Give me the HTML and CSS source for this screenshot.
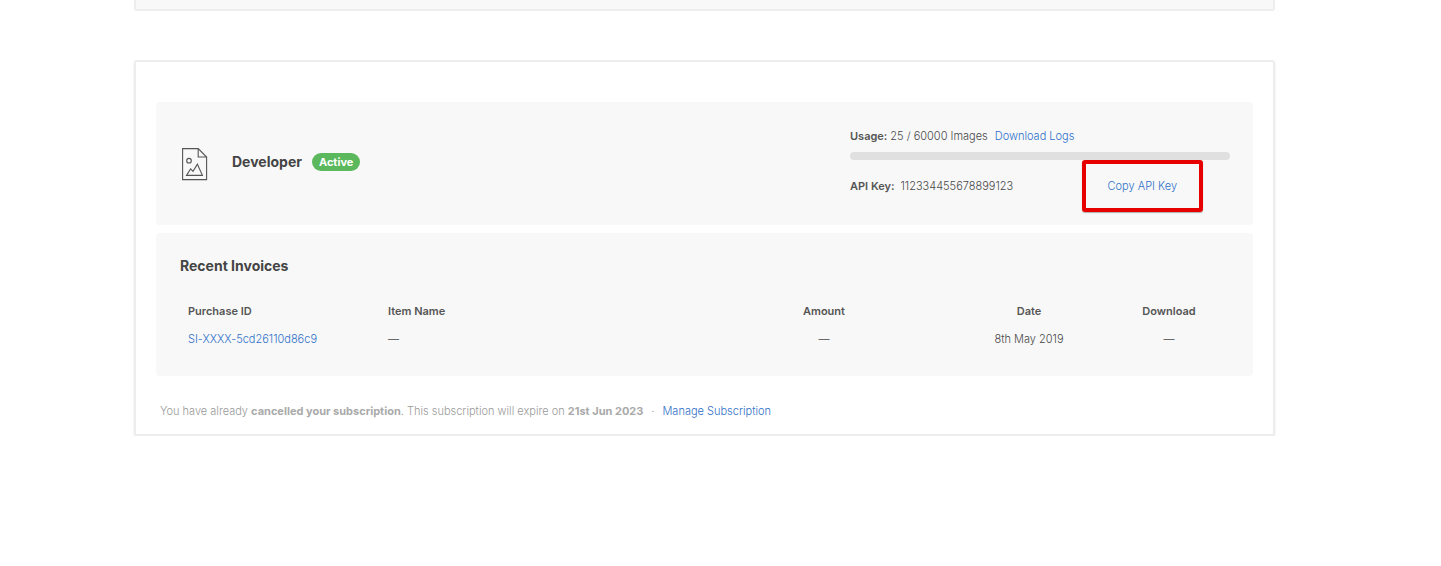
FILE: index.html
```html
<!DOCTYPE html>
<html lang="en">
<head>
<meta charset="utf-8">
<meta name="viewport" content="width=device-width, initial-scale=1">
<title>Subscriptions</title>
<link rel="stylesheet" href="styles.css">
</head>
<body>
<main class="page">
  <section class="card card-previous" aria-hidden="true"></section>
  <section class="card card-subscription">
    <div class="panel plan">
      <svg class="plan-icon" width="28" height="34" viewBox="0 0 28 34" fill="none" stroke="#555" stroke-width="1.1" aria-hidden="true">
        <path d="M1.6 1.6H17.2L25.6 10V32.6H1.6Z"/>
        <path d="M17.2 1.6V10H25.6"/>
        <circle cx="8" cy="13.7" r="2.3"/>
        <path d="M5.6 28.4L9.6 21.8L12 24.4L16.4 17.2L21.4 28.4Z"/>
      </svg>
      <div class="plan-title">
        <h2 class="heading">Developer</h2>
        <span class="badge">Active</span>
      </div>
      <div class="usage">
        <div class="usage-row">
          <strong id="usage-label">Usage:</strong>
          <span>25 / 60000 Images</span>
          <a class="logs" href="#logs">Download Logs</a>
        </div>
        <div class="meter" role="progressbar" aria-labelledby="usage-label" aria-valuemin="0" aria-valuemax="60000" aria-valuenow="25"></div>
        <div class="key-row">
          <strong>API Key:</strong>
          <span class="key">112334455678899123</span>
          <button class="copy" type="button">Copy API Key</button>
        </div>
      </div>
    </div>
    <div class="panel invoices">
      <h2 class="heading">Recent Invoices</h2>
      <table class="table">
        <colgroup><col class="c-id"><col class="c-item"><col class="c-amount"><col class="c-date"><col class="c-download"></colgroup>
        <thead>
          <tr><th>Purchase ID</th><th>Item Name</th><th class="center">Amount</th><th class="center">Date</th><th class="center">Download</th></tr>
        </thead>
        <tbody>
          <tr><td><a href="#invoice">SI-XXXX-5cd26110d86c9</a></td><td>—</td><td class="center">—</td><td class="center">8th May 2019</td><td class="center">—</td></tr>
        </tbody>
      </table>
    </div>
    <p class="note">You have already <strong>cancelled your subscription</strong>. This subscription will expire on <strong>21st Jun 2023</strong><span class="dot">·</span><a href="#manage">Manage Subscription</a></p>
  </section>
</main>
</body>
</html>
```
FILE: styles.css
```css
* { box-sizing: border-box; }
body {
  margin: 0;
  background: #fff;
  color: #484848;
  font: 300 11px/20px Inter, "Liberation Sans", sans-serif;
}
a { color: #2f70c8; text-decoration: none; }
strong, th { color: #555; font-weight: 600; }
.page {
  display: flex;
  flex-direction: column;
  gap: 49px;
  padding: 0 166px 0 134px;
}
.card {
  border: 2px solid #ededed;
  border-radius: 3px;
  background: #fff;
}
.card-previous {
  height: 11px;
  border-top: 0;
  border-radius: 0 0 3px 3px;
  background: #f8f8f8;
}
.card-subscription {
  display: flex;
  flex-direction: column;
  gap: 8px;
  padding: 40px 20px 13px;
  box-shadow: 0 2px 3px rgba(0, 0, 0, 0.08);
}
.panel { border-radius: 4px; background: #f8f8f8; }
.heading {
  margin: 0;
  color: #444;
  font-size: 14px;
  line-height: 20px;
  font-weight: 700;
}
.plan {
  display: flex;
  align-items: center;
  padding: 24px 23px 0 25px;
}
.plan-icon { flex: none; margin: 0 23px 24px 0; }
.plan-title {
  display: flex;
  flex: 1;
  align-items: center;
  gap: 10px;
  padding-bottom: 28px;
}
.badge {
  padding: 0 7px;
  border-radius: 9px;
  background: #5cb85c;
  color: #fff;
  line-height: 18px;
  font-weight: 700;
}
.usage { width: 380px; padding-bottom: 13px; }
.usage-row { display: flex; gap: 3px; }
.logs { margin-left: 4px; }
.meter {
  height: 8px;
  margin-top: 6px;
  border-radius: 4px;
  background: #e0e0e0;
}
.key-row {
  display: flex;
  align-items: center;
  padding-right: 27px;
}
.key { flex: 1; margin-left: 6px; }
.copy {
  padding: 12px 22px;
  border: 4px solid #e60000;
  border-radius: 3px;
  background: transparent;
  box-shadow: 0 1px 1px rgba(0, 0, 0, 0.3);
  color: #2f70c8;
  font: inherit;
}
.invoices { padding: 23px 44px 23px 24px; }
.table {
  width: 100%;
  margin-top: 21px;
  border-collapse: collapse;
  table-layout: fixed;
}
.table th, .table td { padding: 4px 8px; text-align: left; }
.table .center { text-align: center; }
.c-id { width: 200px; }
.c-amount { width: 210px; }
.c-date { width: 200px; }
.c-download { width: 80px; }
.note {
  margin: 0;
  padding: 17px 4px 0;
  color: #9a9a9a;
}
.note strong { color: #aaa; font-weight: 700; }
.dot { margin: 0 8px; }
```
